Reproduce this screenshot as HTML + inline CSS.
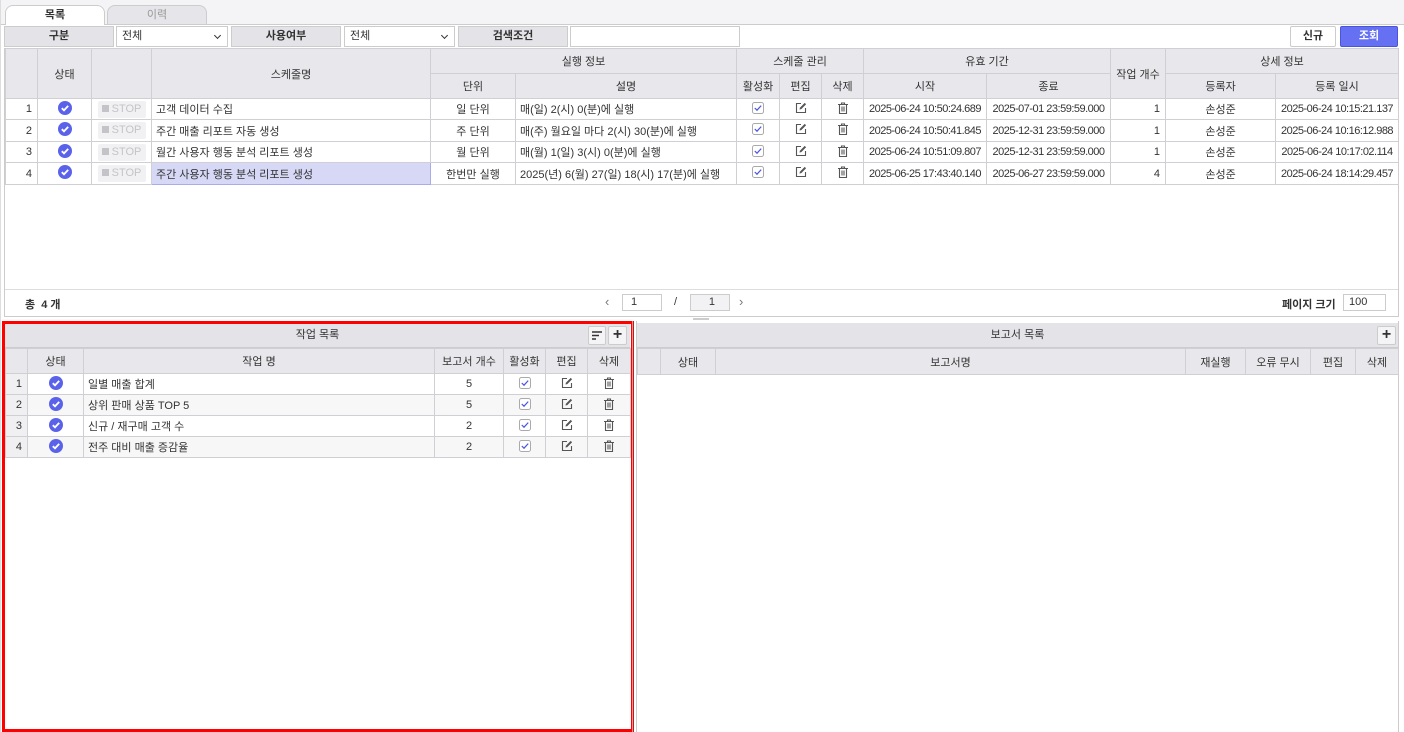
<!DOCTYPE html>
<html><head><meta charset="utf-8"><style>
*{box-sizing:border-box;margin:0;padding:0}
body{width:1404px;height:732px;background:#fff;font-family:"Liberation Sans","Noto Sans CJK KR",sans-serif;font-size:11px;color:#333;position:relative;overflow:hidden}
.a{position:absolute}
table{border-collapse:collapse;table-layout:fixed;position:absolute}
td,th{border:1px solid #d0d0d4;text-align:center;white-space:nowrap;overflow:hidden;font-weight:normal;padding:0 3px}
th{background:#e8e8ec;color:#333}
td.l{text-align:left;padding-left:4px}
td.r{text-align:right;padding-right:5px}
td.n{background:#f0f0f2;text-align:right;padding-right:5px}
td.d{font-size:11px;letter-spacing:-0.5px;padding:0 1px}
.lab{position:absolute;background:#e4e4e8;border:1px solid #ccc;text-align:center;font-weight:bold;line-height:19px;height:21px;font-size:11px}
.sel{position:absolute;background:#fff;border:1px solid #ccc;height:21px;line-height:19px;padding-left:5px}
.sel.dd:after{content:"";position:absolute;right:7px;top:6px;width:4px;height:4px;border-right:1.5px solid #333;border-bottom:1.5px solid #333;transform:rotate(45deg)}
.stop{display:inline-block;width:48px;height:17px;line-height:17px;background:#f1f1f3;color:#c4c4c8;font-size:11px;border-radius:2px}
.stop:before{content:"";display:inline-block;width:7px;height:7px;background:#c4c4c8;margin-right:3px}
</style></head><body>
<div class="a" style="left:0;top:0;width:1404px;height:25px;background:#f4f4f6;border-bottom:1px solid #ccc"></div>
<div class="a" style="left:0;top:0;width:1px;height:732px;background:#ddd"></div>
<div class="a" style="left:5px;top:5px;width:100px;height:20px;background:#fff;border:1px solid #ccc;border-bottom:none;border-radius:8px 8px 0 0;text-align:center;line-height:19px;font-weight:bold">목록</div>
<div class="a" style="left:107px;top:5px;width:100px;height:19px;background:#e6e6ea;border:1px solid #ccc;border-bottom:none;border-radius:8px 8px 0 0;text-align:center;line-height:19px;color:#999">이력</div>
<div class="lab" style="left:4px;top:26px;width:110px">구분</div>
<div class="sel dd" style="left:116px;top:26px;width:112px">전체</div>
<div class="lab" style="left:231px;top:26px;width:110px">사용여부</div>
<div class="sel dd" style="left:344px;top:26px;width:111px">전체</div>
<div class="lab" style="left:458px;top:26px;width:110px">검색조건</div>
<div class="sel" style="left:570px;top:26px;width:170px;padding:0"></div>
<div class="a" style="left:1290px;top:26px;width:46px;height:21px;border:1px solid #ccc;border-radius:2px;background:#fff;text-align:center;line-height:19px;font-weight:bold">신규</div>
<div class="a" style="left:1340px;top:26px;width:58px;height:21px;border:1px solid #4a55d8;border-radius:2px;background:#6670f2;color:#fff;text-align:center;line-height:19px;font-weight:bold">조회</div>
<div class="a" style="left:4px;top:48px;width:1395px;height:269px;border:1px solid #ccc"></div>
<svg width="0" height="0" style="position:absolute"><defs>
<symbol id="ck" viewBox="0 0 14 14"><circle cx="7" cy="7" r="7" fill="#5a62ea"/><path d="M3.8 7.2l2.2 2.1 4.2-4.4" stroke="#fff" stroke-width="1.8" fill="none"/></symbol>
<symbol id="cb" viewBox="0 0 12 12"><rect x="0.5" y="0.5" width="11" height="11" rx="2" fill="#fff" stroke="#aaa"/><path d="M2.8 6l2.2 2.2 4.2-4.6" stroke="#4a55e0" stroke-width="1.2" fill="none"/></symbol>
<symbol id="ed" viewBox="0 0 12 12"><path d="M6 1.5H1.5v9h9V6" stroke="#555" stroke-width="1.1" fill="none"/><path d="M4.5 7.5l0.4-1.8L9.7 0.9l1.4 1.4L6.3 7.1z" fill="#555"/></symbol>
<symbol id="tr" viewBox="0 0 12 12"><path d="M1 2.5h10M4.5 2.5V1h3v1.5M2.5 2.5v9h7v-9M5 4.5v5M7 4.5v5" stroke="#555" stroke-width="1.1" fill="none"/></symbol>
</defs></svg>
<table style="left:5px;top:48px;width:1393px">
<colgroup><col style="width:32px"><col style="width:54px"><col style="width:60px"><col style="width:279px"><col style="width:85px"><col style="width:221px"><col style="width:43px"><col style="width:42px"><col style="width:42px"><col style="width:123px"><col style="width:124px"><col style="width:55px"><col style="width:110px"><col style="width:123px"></colgroup>
<tr style="height:25px"><th rowspan="2"></th><th rowspan="2">상태</th><th rowspan="2"></th><th rowspan="2">스케줄명</th><th colspan="2">실행 정보</th><th colspan="3">스케줄 관리</th><th colspan="2">유효 기간</th><th rowspan="2">작업 개수</th><th colspan="2">상세 정보</th></tr>
<tr style="height:25px"><th>단위</th><th>설명</th><th>활성화</th><th>편집</th><th>삭제</th><th>시작</th><th>종료</th><th>등록자</th><th>등록 일시</th></tr>
<tr style="height:21px"><td class="n" style="background:#fff">1</td><td><svg width="14" height="14"><use href="#ck"/></svg></td><td><span class="stop">STOP</span></td><td class="l">고객 데이터 수집</td><td>일 단위</td><td class="l">매(일) 2(시) 0(분)에 실행</td><td><svg width="12" height="12"><use href="#cb"/></svg></td><td><svg width="12" height="12"><use href="#ed"/></svg></td><td><svg width="12" height="12"><use href="#tr"/></svg></td><td class="d">2025-06-24 10:50:24.689</td><td class="d">2025-07-01 23:59:59.000</td><td class="r">1</td><td>손성준</td><td class="d">2025-06-24 10:15:21.137</td></tr>
<tr style="height:22px"><td class="n" style="background:#fff">2</td><td><svg width="14" height="14"><use href="#ck"/></svg></td><td><span class="stop">STOP</span></td><td class="l">주간 매출 리포트 자동 생성</td><td>주 단위</td><td class="l">매(주) 월요일 마다 2(시) 30(분)에 실행</td><td><svg width="12" height="12"><use href="#cb"/></svg></td><td><svg width="12" height="12"><use href="#ed"/></svg></td><td><svg width="12" height="12"><use href="#tr"/></svg></td><td class="d">2025-06-24 10:50:41.845</td><td class="d">2025-12-31 23:59:59.000</td><td class="r">1</td><td>손성준</td><td class="d">2025-06-24 10:16:12.988</td></tr>
<tr style="height:21px"><td class="n" style="background:#fff">3</td><td><svg width="14" height="14"><use href="#ck"/></svg></td><td><span class="stop">STOP</span></td><td class="l">월간 사용자 행동 분석 리포트 생성</td><td>월 단위</td><td class="l">매(월) 1(일) 3(시) 0(분)에 실행</td><td><svg width="12" height="12"><use href="#cb"/></svg></td><td><svg width="12" height="12"><use href="#ed"/></svg></td><td><svg width="12" height="12"><use href="#tr"/></svg></td><td class="d">2025-06-24 10:51:09.807</td><td class="d">2025-12-31 23:59:59.000</td><td class="r">1</td><td>손성준</td><td class="d">2025-06-24 10:17:02.114</td></tr>
<tr style="height:22px"><td class="n" style="background:#fff">4</td><td><svg width="14" height="14"><use href="#ck"/></svg></td><td><span class="stop">STOP</span></td><td class="l" style="background:#d6d8f6;border:1px solid #a8acea">주간 사용자 행동 분석 리포트 생성</td><td>한번만 실행</td><td class="l">2025(년) 6(월) 27(일) 18(시) 17(분)에 실행</td><td><svg width="12" height="12"><use href="#cb"/></svg></td><td><svg width="12" height="12"><use href="#ed"/></svg></td><td><svg width="12" height="12"><use href="#tr"/></svg></td><td class="d">2025-06-25 17:43:40.140</td><td class="d">2025-06-27 23:59:59.000</td><td class="r">4</td><td>손성준</td><td class="d">2025-06-24 18:14:29.457</td></tr>
</table>
<div class="a" style="left:5px;top:289px;width:1393px;height:1px;background:#ddd"></div>
<div class="a" style="left:25px;top:296px;font-weight:bold">총 &nbsp;4 개</div>
<div class="a" style="left:605px;top:294px;color:#777;font-size:13px">‹</div>
<div class="a" style="left:622px;top:294px;width:40px;height:17px;border:1px solid #ccc;line-height:15px;padding-left:8px">1</div>
<div class="a" style="left:674px;top:296px">/</div>
<div class="a" style="left:690px;top:294px;width:40px;height:17px;border:1px solid #ccc;background:#f2f2f4;line-height:15px;text-align:right;padding-right:14px">1</div>
<div class="a" style="left:739px;top:294px;color:#777;font-size:13px">›</div>
<div class="a" style="left:1282px;top:296px;font-weight:bold">페이지 크기</div>
<div class="a" style="left:1343px;top:294px;width:43px;height:17px;border:1px solid #ccc;line-height:15px;padding-left:5px">100</div>
<div class="a" style="left:693px;top:318px;width:16px;height:2px;background:#ccc"></div>
<div class="a" style="left:5px;top:323px;width:625px;height:25px;background:#e4e4e8;border-bottom:1px solid #ccc;text-align:center;line-height:25px">작업 목록</div>
<div class="a" style="left:588px;top:326px;width:18px;height:19px;border:1px solid #ccc;background:#f4f4f6;border-radius:2px"><svg width="16" height="17" viewBox="0 0 16 17"><path d="M3 5h10M3 8.5h7M3 12h4" stroke="#333" stroke-width="1.5"/></svg></div>
<div class="a" style="left:608px;top:326px;width:19px;height:19px;border:1px solid #ccc;background:#f4f4f6;border-radius:2px;text-align:center;line-height:16px;font-size:16px;font-weight:bold">+</div>
<table style="left:5px;top:348px;width:625px">
<colgroup><col style="width:22px"><col style="width:56px"><col style="width:351px"><col style="width:69px"><col style="width:42px"><col style="width:42px"><col style="width:43px"></colgroup>
<tr style="height:25px"><th></th><th>상태</th><th>작업 명</th><th>보고서 개수</th><th>활성화</th><th>편집</th><th>삭제</th></tr>
<tr style="height:21px"><td class="n">1</td><td><svg width="14" height="14"><use href="#ck"/></svg></td><td class="l">일별 매출 합계</td><td>5</td><td><svg width="12" height="12"><use href="#cb"/></svg></td><td><svg width="12" height="12"><use href="#ed"/></svg></td><td><svg width="12" height="12"><use href="#tr"/></svg></td></tr>
<tr style="height:21px;background:#f7f7f8"><td class="n">2</td><td><svg width="14" height="14"><use href="#ck"/></svg></td><td class="l">상위 판매 상품 TOP 5</td><td>5</td><td><svg width="12" height="12"><use href="#cb"/></svg></td><td><svg width="12" height="12"><use href="#ed"/></svg></td><td><svg width="12" height="12"><use href="#tr"/></svg></td></tr>
<tr style="height:21px"><td class="n">3</td><td><svg width="14" height="14"><use href="#ck"/></svg></td><td class="l">신규 / 재구매 고객 수</td><td>2</td><td><svg width="12" height="12"><use href="#cb"/></svg></td><td><svg width="12" height="12"><use href="#ed"/></svg></td><td><svg width="12" height="12"><use href="#tr"/></svg></td></tr>
<tr style="height:21px;background:#f7f7f8"><td class="n">4</td><td><svg width="14" height="14"><use href="#ck"/></svg></td><td class="l">전주 대비 매출 증감율</td><td>2</td><td><svg width="12" height="12"><use href="#cb"/></svg></td><td><svg width="12" height="12"><use href="#ed"/></svg></td><td><svg width="12" height="12"><use href="#tr"/></svg></td></tr>
</table>
<div class="a" style="left:2px;top:321px;width:632px;height:411px;border:3px solid #f00"></div>
<div class="a" style="left:632px;top:321px;width:1px;height:411px;background:#aaa"></div>
<div class="a" style="left:636px;top:321px;width:1px;height:411px;background:#ccc"></div>
<div class="a" style="left:1398px;top:321px;width:1px;height:411px;background:#ccc"></div>
<div class="a" style="left:637px;top:323px;width:761px;height:25px;background:#e4e4e8;border-bottom:1px solid #ccc;text-align:center;line-height:25px">보고서 목록</div>
<div class="a" style="left:1377px;top:326px;width:19px;height:19px;border:1px solid #ccc;background:#f4f4f6;border-radius:2px;text-align:center;line-height:16px;font-size:16px;font-weight:bold">+</div>
<table style="left:637px;top:348px;width:761px">
<colgroup><col style="width:23px"><col style="width:55px"><col style="width:470px"><col style="width:60px"><col style="width:65px"><col style="width:45px"><col style="width:43px"></colgroup>
<tr style="height:26px"><th></th><th>상태</th><th>보고서명</th><th>재실행</th><th>오류 무시</th><th>편집</th><th>삭제</th></tr>
</table>
</body></html>
